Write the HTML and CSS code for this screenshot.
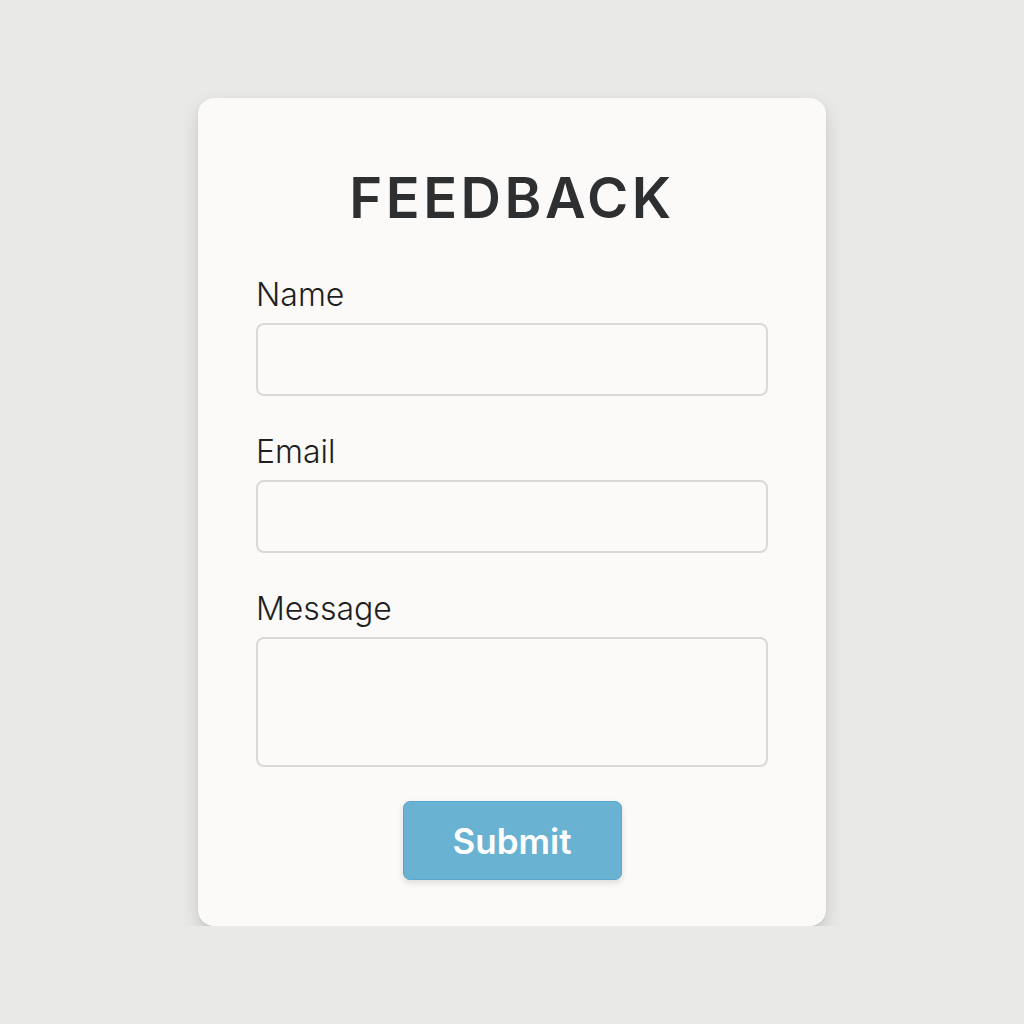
FILE: index.html
```html
<!DOCTYPE html>
<html lang="en">

<head>
    <meta charset="UTF-8">
    <title>Feedback</title>
    <link rel="stylesheet" href="styles.css">
</head>

<body>
    <main class="card">
        <h1 class="title">FEEDBACK</h1>
        <form class="feedback-form">
            <!-- 输入项 -->
            <label class="field">
                <span class="field-label">Name</span>
                <input class="field-input" type="text">
            </label>
            <label class="field">
                <span class="field-label">Email</span>
                <input class="field-input" type="email">
            </label>
            <label class="field">
                <span class="field-label">Message</span>
                <textarea class="field-input field-textarea"></textarea>
            </label>
            <!-- 提交 -->
            <button class="submit" type="button">Submit</button>
        </form>
    </main>
</body>

</html>
```

FILE: styles.css
```css
* {
    box-sizing: border-box;
}

body {
    margin: 0;
    padding-top: 98px;
    background: #e9e9e7;
    font-family: Inter, "Noto Sans", sans-serif;
    color: #222;
}

.card {
    width: 628px;
    height: 828px;
    margin: 0 auto;
    padding: 67px 58px 46px;
    background: #fbfaf8;
    border-radius: 16px;
    box-shadow: 0 8px 18px rgba(0, 0, 0, .14), 0 1px 3px rgba(0, 0, 0, .06);
}

.title {
    margin: 0;
    font-size: 56px;
    font-weight: 600;
    line-height: 1.2;
    letter-spacing: 3.5px;
    text-align: center;
    color: #2e2f31;
}

.feedback-form {
    display: flex;
    flex-direction: column;
    margin-top: 44px;
}

.field {
    display: flex;
    flex-direction: column;
    gap: 9px;
    margin-bottom: 37px;
}

.field-label {
    font-size: 32px;
    font-weight: 300;
    line-height: 38px;
    color: #1f1f1f;
}

.field-input {
    display: block;
    width: 100%;
    height: 73px;
    margin: 0;
    padding: 10px 16px;
    font: inherit;
    background: #fbfaf8;
    border: 2px solid #d9d9d7;
    border-radius: 8px;
    resize: none;
    outline: none;
}

.field-textarea {
    height: 130px;
}

.field:last-of-type {
    margin-bottom: 34px;
}

.submit {
    align-self: center;
    width: 219px;
    height: 79px;
    font-family: inherit;
    font-size: 35px;
    font-weight: 600;
    color: #fff;
    background: #6ab2d2;
    border: 1px solid #5aa8cf;
    border-radius: 7px;
    box-shadow: 0 3px 6px rgba(0, 0, 0, .12);
    cursor: pointer;
}
```
